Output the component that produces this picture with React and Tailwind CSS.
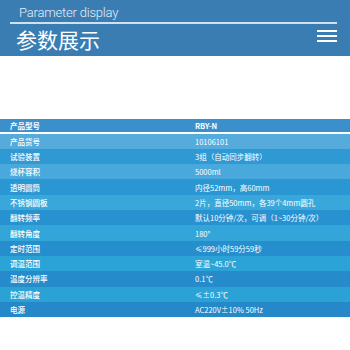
const rows = [
  ["产品货号", "10106101", "bg-[#55abdc]"],
  ["试验装置", "3组（自动同步翻转）", "bg-[#2f99d4]"],
  ["烧杯容积", "5000ml", "bg-[#4aa9dc]"],
  ["透明圆筒", "内径52mm，高60mm", "bg-[#2a97d3]"],
  ["不锈钢圆板", "2片，直径50mm，各39个4mm圆孔", "bg-[#3aa7da]"],
  ["翻转频率", "默认10分钟/次，可调（1~30分钟/次）", "bg-[#2892d0]"],
  ["翻转角度", "180°", "bg-[#33a5d8]"],
  ["定时范围", "≤999小时59分59秒", "bg-[#268ecd]"],
  ["调温范围", "室温~45.0℃", "bg-[#2ca3d6]"],
  ["温度分辨率", "0.1℃", "bg-[#268bcb]"],
  ["控温精度", "≤±0.3℃", "bg-[#2aa2d5]"],
  ["电源", "AC220V±10% 50Hz", "bg-[#2588c8]"],
];

export default function App() {
  return (
    <div className="w-[350px] h-[350px] bg-white overflow-hidden" style={{ fontFamily: '"Noto Sans", "Noto Sans CJK SC", sans-serif' }}>
      <header className="h-[56px] bg-[#3a7db3] pl-[10px] pr-[13px] pt-[4px]">
        <div className="pl-[9px] text-[13px] leading-[17px] font-light tracking-[-0.2px] text-[#e6eef6]" style={{ fontFamily: 'Roboto, sans-serif' }}>Parameter display</div>
        <div className="h-[2px] bg-[#cfe0ee] mt-[1px]" />
        <div className="flex items-start justify-between">
          <div className="pl-[6px] text-[21px] leading-[30px] text-white" style={{ fontFamily: '"Noto Sans CJK SC", sans-serif' }}>参数展示</div>
          <div className="flex flex-col gap-[3px] mt-[6px]">
            <span className="block w-[20px] h-[2px] bg-white" />
            <span className="block w-[20px] h-[2px] bg-white" />
            <span className="block w-[20px] h-[2px] bg-white" />
          </div>
        </div>
      </header>
      <div className="mt-[63px] text-white text-[7.5px]" style={{ fontFamily: '"Noto Sans CJK SC", sans-serif' }}>
        <div className="flex items-center h-[13px] bg-[#3b90cc] font-bold">
          <div className="w-[195px] pl-[10px]">产品型号</div>
          <div>RBY-N</div>
        </div>
        <div className="h-[1.5px] bg-white" />
        {rows.map(([k, v, c]) => (
          <div key={k} className={`flex items-center h-[15.33px] ${c}`}>
            <div className="w-[195px] pl-[10px] font-medium">{k}</div>
            <div>{v}</div>
          </div>
        ))}
      </div>
    </div>
  );
}
